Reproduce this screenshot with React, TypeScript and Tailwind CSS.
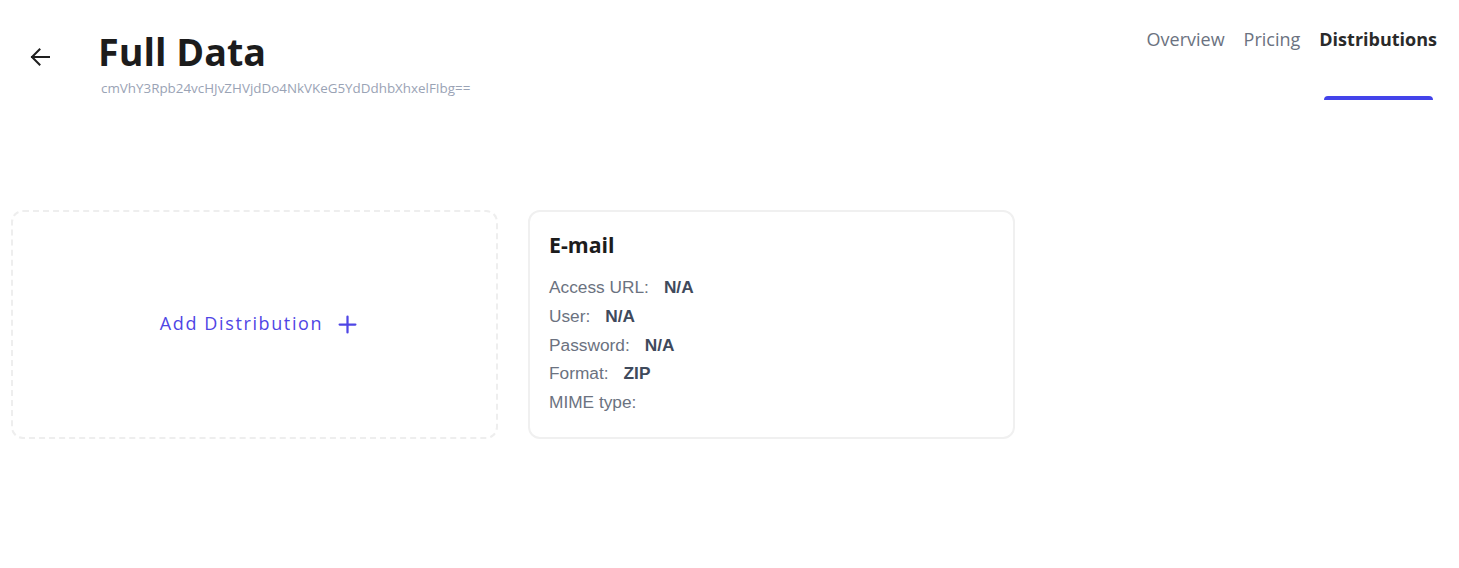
import { Plus } from "lucide-react";

const ROWS = [
    { label: "Access URL:", value: "N/A" },
    { label: "User:", value: "N/A" },
    { label: "Password:", value: "N/A" },
    { label: "Format:", value: "ZIP" },
    { label: "MIME type:", value: "" },
];

const TABS = [
    { name: "Overview", active: false },
    { name: "Pricing", active: false },
    { name: "Distributions", active: true },
];

function BackArrow() {
    return (
        <svg width="22" height="20" viewBox="0 0 22 20" fill="none" stroke="#1f1f1f" strokeWidth="2" strokeLinecap="square">
            <path d="M3 10h17" />
            <path d="M10.5 2.5 3 10l7.5 7.5" />
        </svg>
    );
}

export default function App() {
    return (
        <div className="min-h-[568px] bg-white font-['Open_Sans',sans-serif]">
            <header className="flex justify-between pl-[29px] pr-[22px]">
                <div className="flex items-start pt-[27px]">
                    <button className="mt-[20px] w-[22px]">
                        <BackArrow />
                    </button>
                    <div className="ml-[47px]">
                        <h1 className="text-[37.7px] leading-[50px] font-bold text-[#1c1c1c]">Full Data</h1>
                        <p className="ml-[3px] mt-[3px] text-[13.4px] leading-4 text-[#9aa3b5]">
                            cmVhY3Rpb24vcHJvZHVjdDo4NkVKeG5YdDdhbXhxelFIbg==
                        </p>
                    </div>
                </div>
                <nav className="flex gap-[19px] pt-[25px]">
                    {TABS.map((tab) => (
                        <div key={tab.name} className="flex flex-col items-center">
                            <span
                                className={
                                    tab.active
                                        ? "text-[18px] leading-[28px] font-bold text-[#2a2a2a]"
                                        : "text-[18px] leading-[28px] text-[#6b7280]"
                                }
                            >
                                {tab.name}
                            </span>
                            <span
                                className={
                                    tab.active
                                        ? "mt-[43px] h-[4px] w-[109px] rounded-t-md bg-[#4343ea]"
                                        : "mt-[43px] h-[4px]"
                                }
                            />
                        </div>
                    ))}
                </nav>
            </header>

            <main className="flex gap-[30px] pl-[11px] pt-[110px]">
                <button className="flex h-[229px] w-[487px] items-center justify-center rounded-xl border-2 border-dashed border-[#eeeeee] pl-[12px]">
                    <span className="-mt-[3px] text-[18px] tracking-[0.09em] text-[#4f46e5]">Add Distribution</span>
                    <Plus className="ml-[11px] h-[27px] w-[27px] text-[#4f46e5]" strokeWidth={2} />
                </button>

                <div className="h-[229px] w-[487px] rounded-xl border-2 border-[#f0f0f0] pl-[19px] pt-[17px]">
                    <h2 className="text-[21.3px] leading-[32px] font-bold text-[#1c1c1c]">E-mail</h2>
                    <div className="mt-[12px] font-['Liberation_Sans',Arial,sans-serif] text-[17.3px]">
                        {ROWS.map((row) => (
                            <div key={row.label} className="flex leading-[28.75px]">
                                <span className="text-[#6b7280]">{row.label}</span>
                                {row.value && (
                                    <span className="ml-[15px] font-bold text-[#3f4a5c]">{row.value}</span>
                                )}
                            </div>
                        ))}
                    </div>
                </div>
            </main>
        </div>
    );
}
